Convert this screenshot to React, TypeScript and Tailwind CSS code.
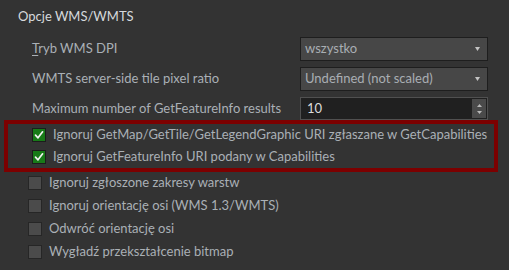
import React from "react";

const font = { fontFamily: "Lato, 'Noto Sans', sans-serif" };

function Check({ checked }: { checked: boolean }) {
  return (
    <div
      className={
        "w-[14px] h-[14px] border flex items-center justify-center shrink-0 " +
        (checked ? "bg-[#187a18] border-[#1c1c1c]" : "bg-[#4b4b4b] border-[#262626]")
      }
    >
      {checked && (
        <svg width="10" height="10" viewBox="0 0 10 10">
          <path d="M1.5 5.2 L4 7.8 L8.6 1.8" stroke="#f2f2f2" strokeWidth="1.7" fill="none" strokeLinecap="round" strokeLinejoin="round" />
        </svg>
      )}
    </div>
  );
}

function CheckRow({ checked, label }: { checked: boolean; label: string }) {
  return (
    <div className="h-[22px] flex items-center pl-[28px] gap-[7px]">
      <Check checked={checked} />
      <span className="text-[13px] text-[#aab0b6] whitespace-nowrap">{label}</span>
    </div>
  );
}

function Combo({ value }: { value: string }) {
  return (
    <div className="w-[188px] h-[24px] bg-[#474747] border border-[#1e1e1e] flex items-center pl-[4px] pr-[7px]">
      <span className="flex-1 text-[13px] text-[#a9aeb3] whitespace-nowrap">{value}</span>
      <svg width="5" height="4" viewBox="0 0 5 4">
        <path d="M0 0 H5 L2.5 4 Z" fill="#c4c4c4" />
      </svg>
    </div>
  );
}

function Spin() {
  return (
    <div className="w-[188px] h-[23px] bg-[#202020] border border-[#505050] flex items-stretch">
      <span className="flex-1 text-[13px] text-[#dcdcdc] pl-[6px] flex items-center">10</span>
      <div className="w-[14px] my-[1px] mr-[1px] bg-[#4a4a4a] flex flex-col items-center justify-center gap-[4px]">
        <svg width="5" height="3" viewBox="0 0 5 3">
          <path d="M0 3 H5 L2.5 0 Z" fill="#b8b8b8" />
        </svg>
        <svg width="5" height="3" viewBox="0 0 5 3">
          <path d="M0 0 H5 L2.5 3 Z" fill="#b8b8b8" />
        </svg>
      </div>
    </div>
  );
}

export default function App() {
  return (
    <div className="w-[509px] h-[270px] bg-[#333333] overflow-hidden relative" style={font}>
      <div className="h-[33px] flex items-center pl-[18px] text-[13px] text-[#d6d9dc]">Opcje WMS/WMTS</div>
      <div className="flex flex-col gap-[6px] mt-[4px]">
        <div className="flex items-center h-[24px]">
          <span className="w-[300px] shrink-0 pl-[32px] text-[13px] text-[#aab0b6]">
            <span className="underline underline-offset-2">T</span>ryb WMS DPI
          </span>
          <Combo value="wszystko" />
        </div>
        <div className="flex items-center h-[24px]">
          <span className="w-[300px] shrink-0 pl-[32px] text-[13px] text-[#aab0b6]">WMTS server-side tile pixel ratio</span>
          <Combo value="Undefined (not scaled)" />
        </div>
        <div className="flex items-center h-[23px]">
          <span className="w-[300px] shrink-0 pl-[32px] text-[13px] text-[#aab0b6] whitespace-nowrap">Maximum number of GetFeatureInfo results</span>
          <Spin />
        </div>
      </div>
      <div className="ml-[4px] w-[494px] border-[4px] border-[#7c0000] flex flex-col">
        <div className="-ml-[4px]">
          <CheckRow checked label="Ignoruj GetMap/GetTile/GetLegendGraphic URI zgłaszane w GetCapabilities" />
          <CheckRow checked label="Ignoruj GetFeatureInfo URI podany w Capabilities" />
        </div>
      </div>
      <div className="flex flex-col gap-[1px]">
        <CheckRow checked={false} label="Ignoruj zgłoszone zakresy warstw" />
        <CheckRow checked={false} label="Ignoruj orientację osi (WMS 1.3/WMTS)" />
        <CheckRow checked={false} label="Odwróć orientację osi" />
        <CheckRow checked={false} label="Wygładź przekształcenie bitmap" />
      </div>
    </div>
  );
}
